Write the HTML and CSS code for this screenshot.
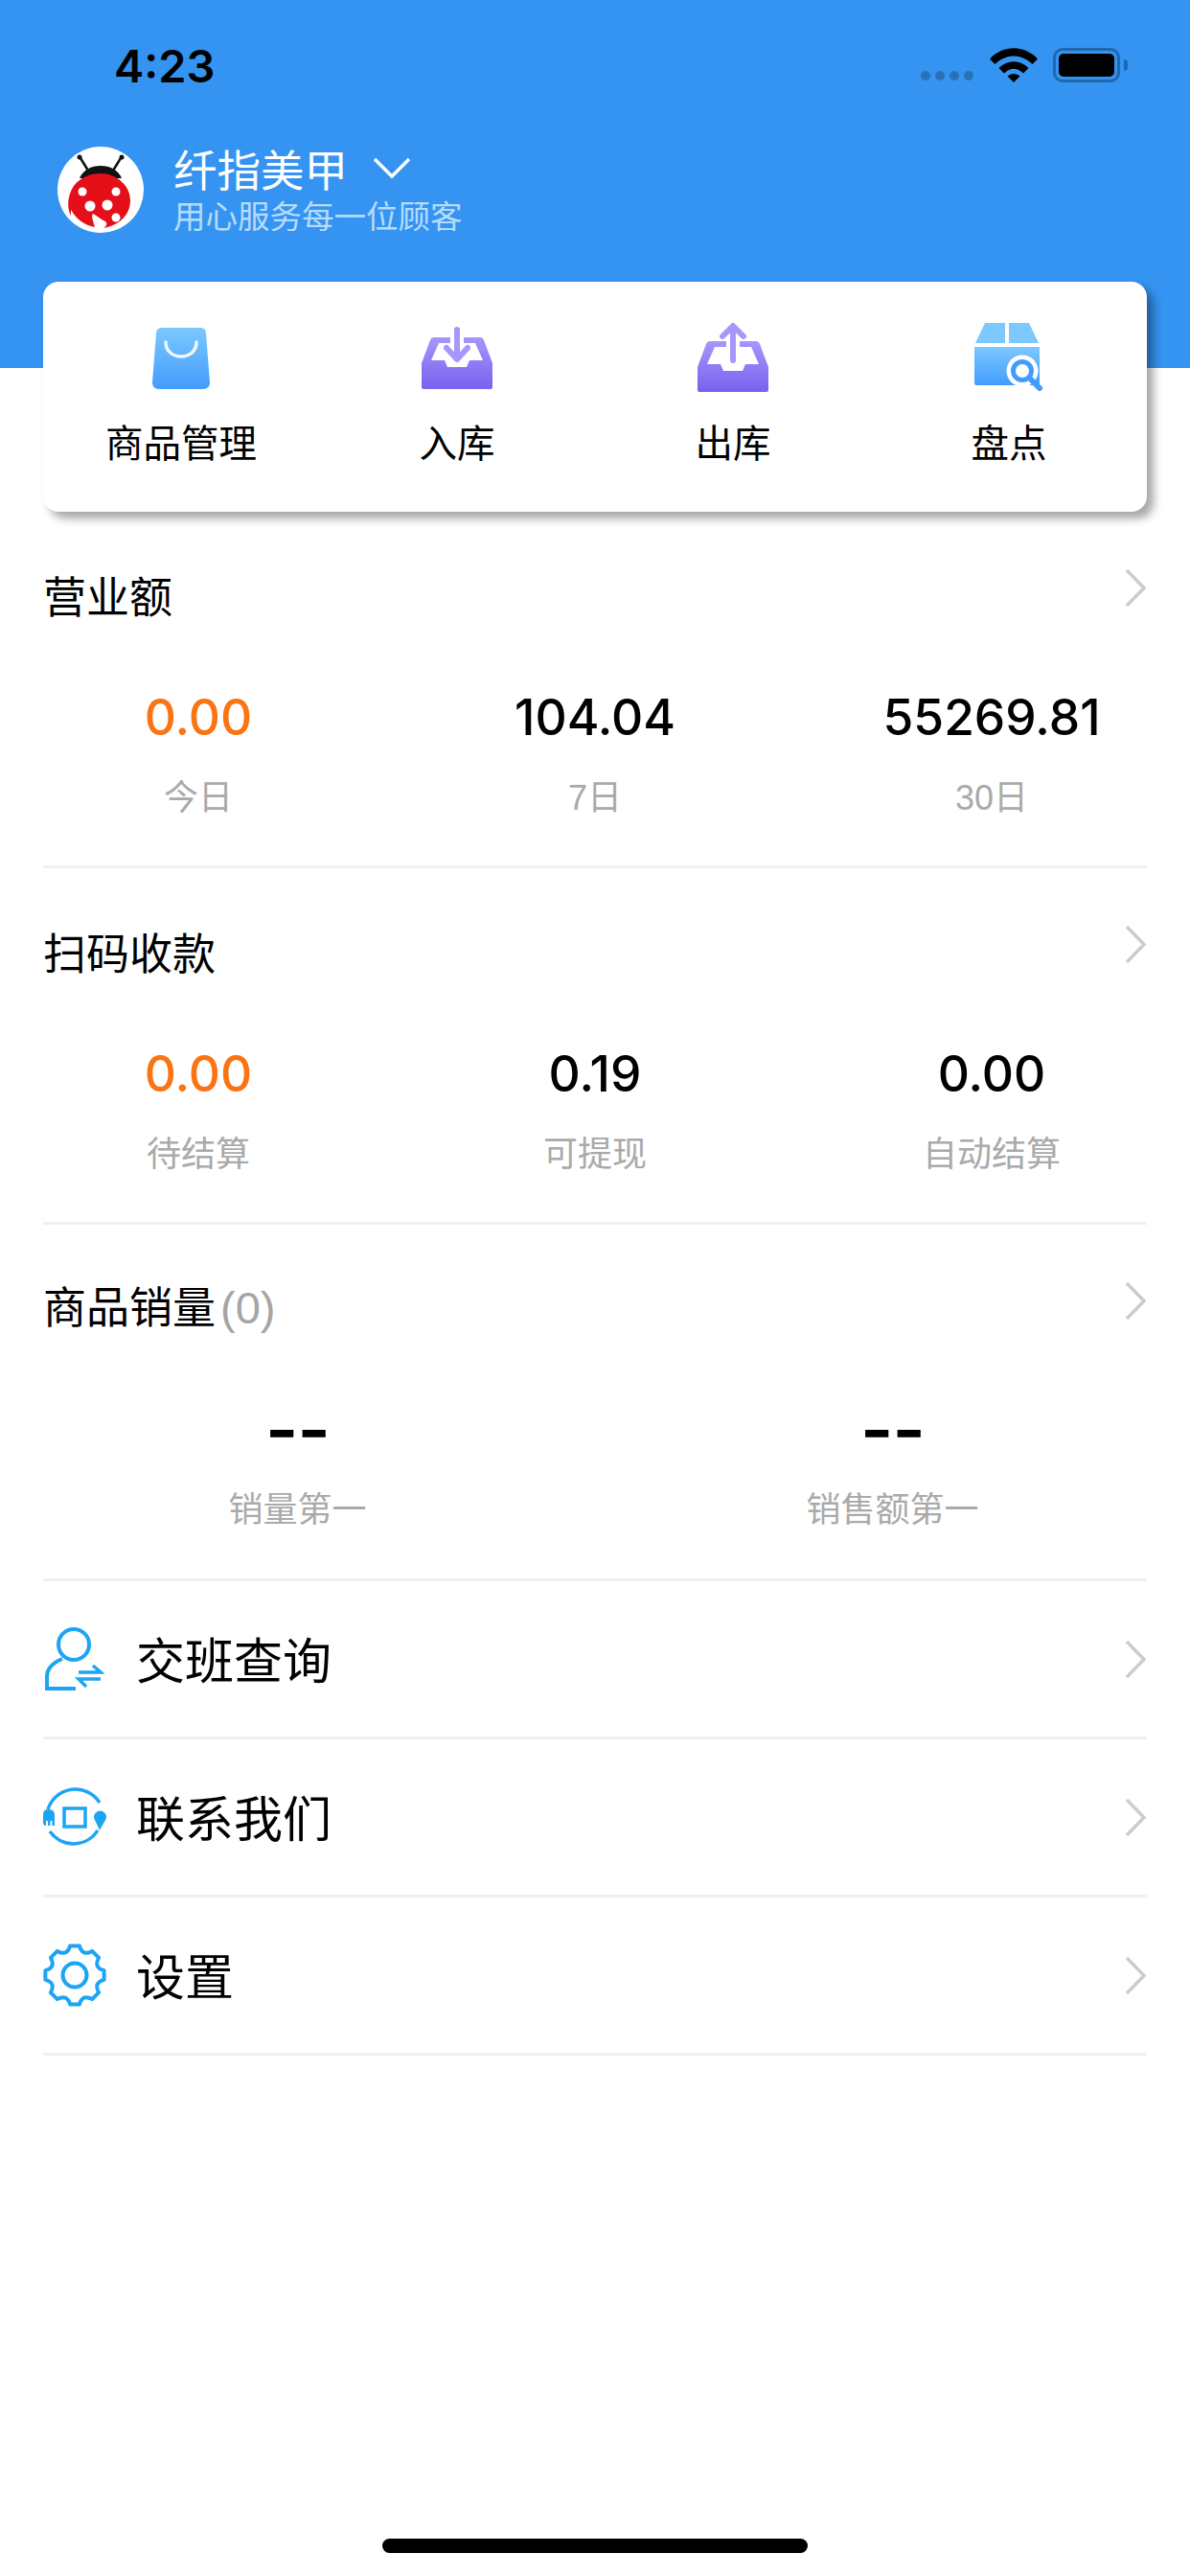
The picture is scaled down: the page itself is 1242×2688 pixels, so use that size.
FILE: index.html
```html
<!DOCTYPE html>
<html lang="zh-CN">
<head>
    <meta charset="UTF-8">
    <meta name="viewport" content="width=device-width, initial-scale=1.0">
    <title>纤指美甲</title>
    <link rel="stylesheet" href="styles.css">
</head>
<body>
    <div class="page">
        <header class="header">
            <div class="status-bar">
                <span class="time">4:23</span>
                <div class="status-icons">
                    <div class="signal"><i></i><i></i><i></i><i></i></div>
                    <svg class="wifi" viewBox="0 0 50 36"><path d="M0 11.5C14-3.5 36-3.5 50 11.5L44.5 17C33 5.5 17 5.5 5.5 17Z"/><path d="M9.5 21C18.5 12 31.5 12 40.5 21L35 26.5C28.5 20 21.5 20 15 26.5Z"/><path d="M18.5 29.5C22.5 26 27.5 26 31.5 29.5L25 36Z"/></svg>
                    <div class="battery"><div class="battery-fill"></div></div>
                    <div class="battery-nib"></div>
                </div>
            </div>
            <div class="shop">
                <svg class="avatar" viewBox="0 0 90 90">
                    <circle cx="45" cy="45" r="45" fill="#fff"/>
                    <path d="M24 12L32 25M66 12L58 25" stroke="#111" stroke-width="2.5" stroke-linecap="round"/>
                    <circle cx="23" cy="11" r="2.5" fill="#111"/><circle cx="67" cy="11" r="2.5" fill="#111"/>
                    <path d="M23 33C27 24 35 20 45 20C55 20 63 24 67 33Z" fill="#111"/>
                    <path d="M14 72C9 62 11 50 17 41C24 32 34 28 45 28C62 28 76 41 76 56C76 71 65 82 48 85C52 82 52 80 50 78C45 76 41 72 37 70C35 72 37 77 39 84C28 82 20 76 14 66Z" fill="#e50f1a"/>
                    <circle cx="26" cy="47" r="4.5" fill="#fff"/><circle cx="61" cy="47" r="4.5" fill="#fff"/>
                    <circle cx="34" cy="62" r="5.5" fill="#fff"/><circle cx="52" cy="61" r="5.5" fill="#fff"/>
                    <circle cx="61" cy="74" r="4.5" fill="#fff"/>
                </svg>
                <div class="shop-text">
                    <div class="shop-name">纤指美甲
                        <svg class="shop-arrow" viewBox="0 0 40 24"><path d="M2 3L20 21L38 3" fill="none" stroke="#fff" stroke-width="3.5"/></svg>
                    </div>
                    <div class="shop-slogan">用心服务每一位顾客</div>
                </div>
            </div>
        </header>

        <nav class="card">
            <div class="tile">
                <svg class="tile-icon" viewBox="0 0 80 70">
                    <defs>
                        <linearGradient id="blue" x1="0" y1="0" x2="0" y2="1"><stop offset="0" stop-color="#7cc8ff"/><stop offset="1" stop-color="#429cfb"/></linearGradient>
                        <linearGradient id="purple" x1="0" y1="0" x2="0" y2="1"><stop offset="0" stop-color="#a796fb"/><stop offset="1" stop-color="#7762ef"/></linearGradient>
                    </defs>
                    <path d="M14 9Q14 3 20 3H60Q66 3 66 9L70 60Q70 67 63 67H17Q10 67 10 60Z" fill="url(#blue)"/>
                    <path d="M24 18C24 38 56 38 56 18" fill="none" stroke="#fff" stroke-width="3.5" stroke-linecap="round" opacity=".9"/>
                </svg>
                <span>商品管理</span>
            </div>
            <div class="tile">
                <svg class="tile-icon" viewBox="0 0 80 70">
                    <path d="M16 13H33V19H21L13 37H27L30 44H50L53 37H67L59 19H47V13H64Q67 13 68 16L77 40V65Q77 67 75 67H5Q3 67 3 65V40L12 16Q13 13 16 13Z" fill="url(#purple)"/>
                    <path d="M40 5V32" stroke="#a796fb" stroke-width="6" stroke-linecap="round"/>
                    <path d="M29 24L40 36L51 24" fill="none" stroke="#a796fb" stroke-width="6" stroke-linecap="round" stroke-linejoin="round"/>
                </svg>
                <span>入库</span>
            </div>
            <div class="tile">
                <svg class="tile-icon tile-icon-tall" viewBox="0 0 80 76">
                    <path d="M16 21H33V27H21L13 45H27L30 52H50L53 45H67L59 27H47V21H64Q67 21 68 24L77 48V72Q77 74 75 74H5Q3 74 3 72V48L12 24Q13 21 16 21Z" fill="url(#purple)"/>
                    <path d="M40 7V41" stroke="#a796fb" stroke-width="6" stroke-linecap="round"/>
                    <path d="M29 16L40 5L51 16" fill="none" stroke="#a796fb" stroke-width="6" stroke-linecap="round" stroke-linejoin="round"/>
                </svg>
                <span>出库</span>
            </div>
            <div class="tile">
                <svg class="tile-icon tile-icon-tall" viewBox="0 0 80 76">
                    <path d="M15 2H36V23H5Z M40 2H61L71 23H40Z" fill="#7cc8ff"/>
                    <path d="M4 27H72V65Q72 67 70 67H6Q4 67 4 65Z" fill="url(#blue)"/>
                    <circle cx="54" cy="52" r="16.5" fill="#fff"/>
                    <circle cx="54" cy="52" r="9.5" fill="none" stroke="#429cfb" stroke-width="5"/>
                    <path d="M63 61L72 70" stroke="#429cfb" stroke-width="6" stroke-linecap="round"/>
                </svg>
                <span>盘点</span>
            </div>
        </nav>

        <section class="stat-block">
            <div class="stat-head">
                <span>营业额</span>
                <svg class="chevron chevron-top" viewBox="0 0 23 39"><path d="M2 1L20 19.5L2 38" fill="none" stroke="#ccc" stroke-width="3.5"/></svg>
            </div>
            <div class="stat-cols">
                <div class="stat"><b class="orange">0.00</b><span>今日</span></div>
                <div class="stat"><b>104.04</b><span>7日</span></div>
                <div class="stat"><b>55269.81</b><span>30日</span></div>
            </div>
        </section>

        <section class="stat-block">
            <div class="stat-head">
                <span>扫码收款</span>
                <svg class="chevron chevron-top" viewBox="0 0 23 39"><path d="M2 1L20 19.5L2 38" fill="none" stroke="#ccc" stroke-width="3.5"/></svg>
            </div>
            <div class="stat-cols">
                <div class="stat"><b class="orange">0.00</b><span>待结算</span></div>
                <div class="stat"><b>0.19</b><span>可提现</span></div>
                <div class="stat"><b>0.00</b><span>自动结算</span></div>
            </div>
        </section>

        <section class="stat-block">
            <div class="stat-head stat-head-raised">
                <span>商品销量<em>(0)</em></span>
                <svg class="chevron chevron-top" viewBox="0 0 23 39"><path d="M2 1L20 19.5L2 38" fill="none" stroke="#ccc" stroke-width="3.5"/></svg>
            </div>
            <div class="stat-cols">
                <div class="stat"><b class="dash">--</b><span>销量第一</span></div>
                <div class="stat"><b class="dash">--</b><span>销售额第一</span></div>
            </div>
        </section>

        <div class="menu-row">
            <svg class="menu-icon" viewBox="0 0 66 66">
                <circle cx="32" cy="18" r="16" fill="none" stroke="#1ea4f5" stroke-width="4"/>
                <path d="M34 64H4V52C4 43 10 37 20 33" fill="none" stroke="#1ea4f5" stroke-width="4"/>
                <path d="M37 47H60L52 40M60 54H37L45 62" fill="none" stroke="#1ea4f5" stroke-width="3.5"/>
            </svg>
            <span class="menu-label">交班查询</span>
            <svg class="chevron" viewBox="0 0 23 39"><path d="M2 1L20 19.5L2 38" fill="none" stroke="#ccc" stroke-width="3.5"/></svg>
        </div>
        <div class="menu-row">
            <svg class="menu-icon" viewBox="0 0 66 66">
                <path d="M5 25A30 30 0 0 1 59 18M7 48A30 30 0 0 0 57 47" fill="none" stroke="#1ea4f5" stroke-width="3.5"/>
                <rect x="22" y="24" width="22" height="19" fill="none" stroke="#1ea4f5" stroke-width="3.5"/>
                <path d="M0 30Q0 25 6 25Q12 25 12 31V42H9.5V37H7.5V42H5V37H3V42Q0 42 0 39Z" fill="#1ea4f5"/>
                <circle cx="59.5" cy="33" r="6.5" fill="#1ea4f5"/><path d="M53.5 35L59 47L65.5 35Z" fill="#1ea4f5"/>
            </svg>
            <span class="menu-label">联系我们</span>
            <svg class="chevron" viewBox="0 0 23 39"><path d="M2 1L20 19.5L2 38" fill="none" stroke="#ccc" stroke-width="3.5"/></svg>
        </div>
        <div class="menu-row">
            <svg class="menu-icon" viewBox="0 0 66 66">
                <path d="M28.2 2.4L37.9 2.4Q41 13.6 51.2 7.9L58.1 14.8Q52.4 25 63.6 28.2L63.6 37.9Q52.4 41 58.1 51.2L51.2 58.1Q41 52.4 37.9 63.6L28.2 63.6Q25 52.4 14.8 58.1L7.9 51.2Q13.6 41 2.4 37.9L2.4 28.2Q13.6 25 7.9 14.8L14.8 7.9Q25 13.6 28.2 2.4Z" fill="none" stroke="#1ea4f5" stroke-width="4" stroke-linejoin="round"/>
                <circle cx="33" cy="33" r="12.5" fill="none" stroke="#1ea4f5" stroke-width="4"/>
            </svg>
            <span class="menu-label">设置</span>
            <svg class="chevron" viewBox="0 0 23 39"><path d="M2 1L20 19.5L2 38" fill="none" stroke="#ccc" stroke-width="3.5"/></svg>
        </div>

        <div class="home-bar"></div>
    </div>
</body>
</html>
```

FILE: styles.css
```css
body {
    margin: 0;
    padding: 0;
    background-color: white;
    color: black;
    font-family: "Liberation Sans", "Noto Sans CJK SC", sans-serif;
}

.page {
    display: flex;
    flex-direction: column;
    width: 1242px;
    height: 2688px;
    overflow: hidden;
}

/* header */
.header {
    box-sizing: border-box;
    height: 384px;
    padding: 40px 65px 0 60px;
    background-color: #3593f1;
}

.status-bar {
    display: flex;
    justify-content: space-between;
    align-items: center;
    height: 56px;
    margin-bottom: 51px;
}

.time {
    margin-left: 59px;
    font-family: Inter, sans-serif;
    font-size: 47px;
    font-weight: 600;
}

.status-icons {
    display: flex;
    align-items: center;
}

.signal {
    display: flex;
    gap: 5px;
    margin: 22px 17px 0 0;
}

.signal i {
    width: 10px;
    height: 10px;
    border-radius: 50%;
    background-color: #2a72b8;
}

.wifi {
    width: 50px;
    height: 36px;
    margin-right: 16px;
}

.battery {
    box-sizing: border-box;
    width: 70px;
    height: 36px;
    padding: 3px;
    border: 3px solid #1f68b0;
    border-radius: 10px;
}

.battery-fill {
    height: 100%;
    border-radius: 5px;
    background-color: black;
}

.battery-nib {
    width: 4px;
    height: 12px;
    margin-left: 4px;
    border-radius: 0 6px 6px 0;
    background-color: #1f68b0;
}

.shop {
    display: flex;
    align-items: center;
}

.avatar {
    width: 90px;
    height: 90px;
    margin-right: 31px;
}

.shop-name {
    display: flex;
    align-items: center;
    height: 56px;
    color: white;
    font-size: 45.5px;
}

.shop-arrow {
    width: 40px;
    height: 24px;
    margin-left: 26px;
}

.shop-slogan {
    height: 44px;
    margin-top: 2px;
    color: #b5dcfb;
    font-size: 33.5px;
    line-height: 44px;
}

/* quick actions */
.card {
    display: grid;
    grid-template-columns: repeat(4, 1fr);
    box-sizing: border-box;
    flex-shrink: 0;
    height: 240px;
    margin: -90px 45px 0;
    border-radius: 16px;
    background-color: white;
    box-shadow: 7px 7px 10px rgba(0, 0, 0, 0.35);
}

.tile {
    display: flex;
    flex-direction: column;
    align-items: center;
    padding-top: 45px;
    font-size: 39.5px;
}

.tile-icon {
    width: 80px;
    height: 70px;
    margin-bottom: 29px;
}

.tile-icon-tall {
    height: 76px;
    margin-top: -4px;
    margin-bottom: 27px;
}

.tile span {
    line-height: 50px;
}

/* stat sections */
.stat-block {
    box-sizing: border-box;
    flex-shrink: 0;
    height: 372px;
    margin: 0 45px;
    padding-top: 51px;
    border-bottom: 3px solid #f0f0f0;
}

.stat-head {
    display: flex;
    justify-content: space-between;
    height: 80px;
    font-size: 45px;
    line-height: 80px;
}

.stat-head-raised {
    margin: -4px 0 4px;
}

.stat-head-raised .chevron-top {
    margin-top: 13px;
}

.stat-head em {
    margin-left: 5px;
    color: #a5a5a5;
    font-size: 47px;
    font-style: normal;
}

.chevron {
    flex-shrink: 0;
    width: 23px;
    height: 39px;
}

.chevron-top {
    margin-top: 9px;
}

.stat-cols {
    display: flex;
    margin: 53px -45px 0;
}

.stat {
    flex: 1;
    text-align: center;
}

.stat b {
    display: block;
    height: 60px;
    font-family: Inter, sans-serif;
    font-size: 51.5px;
    font-weight: 550;
    line-height: 60px;
}

.stat b.orange {
    color: #fb7414;
}

.stat b.dash {
    height: 63px;
    font-size: 74px;
    font-weight: 600;
    letter-spacing: -1px;
    line-height: 66px;
}

.stat span {
    display: block;
    margin-top: 30px;
    color: #aaa;
    font-size: 36px;
    line-height: 50px;
}

/* menu rows */
.menu-row {
    display: flex;
    align-items: center;
    box-sizing: border-box;
    flex-shrink: 0;
    height: 165px;
    margin: 0 45px;
    border-bottom: 3px solid #f0f0f0;
}

.menu-icon {
    width: 66px;
    height: 66px;
    margin-right: 31px;
}

.menu-label {
    flex: 1;
    margin-top: -2px;
    font-size: 51px;
}

.home-bar {
    flex-shrink: 0;
    width: 444px;
    height: 15px;
    margin: auto auto 24px;
    border-radius: 8px;
    background-color: black;
}
```
